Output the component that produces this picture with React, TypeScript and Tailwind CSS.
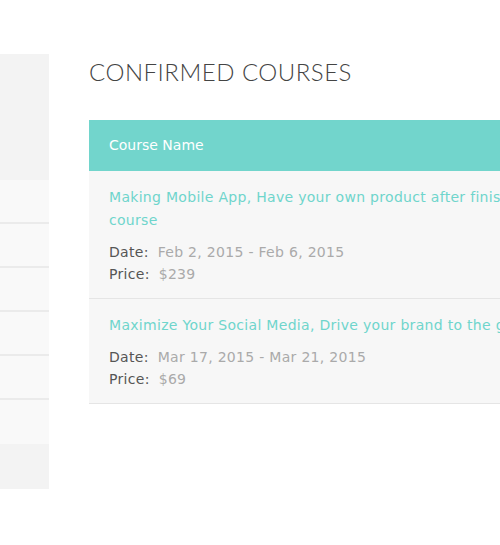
import React from "react";

const courses = [
  {
    title: "Making Mobile App, Have your own product after finishing the course",
    date: "Feb 2, 2015 - Feb 6, 2015",
    price: "$239",
  },
  {
    title: "Maximize Your Social Media, Drive your brand to the global market",
    date: "Mar 17, 2015 - Mar 21, 2015",
    price: "$69",
  },
];

export default function App() {
  return (
    <div className="h-[545px] w-[500px] overflow-hidden bg-white font-['DejaVu_Sans',sans-serif]">
      <div className="flex pt-[54px]">
        {/* Sidebar */}
        <aside className="w-[49px] shrink-0">
          <div className="h-[126px] bg-[#f3f3f3]" />
          {[0, 1, 2, 3, 4, 5].map((i) => (
            <div
              key={i}
              className={`h-[44px] bg-[#f9f9f9] ${i < 5 ? "border-b-2 border-[#ebebeb]" : ""}`}
            />
          ))}
          <div className="h-[45px] bg-[#f3f3f3]" />
        </aside>

        {/* Main */}
        <main className="ml-[40px] w-[600px] shrink-0">
          <h1 className="pt-[3px] font-['Lato',sans-serif] text-[24px] font-light leading-[30px] tracking-[0.5px] text-[#444]">
            CONFIRMED COURSES
          </h1>
          <div className="mt-[33px]">
            <div className="flex h-[51px] items-center bg-[#72d5cc] px-[20px] text-[14px] text-white">
              Course Name
            </div>
            {courses.map((c, i) => (
              <div
                key={c.title}
                className={`border-b border-[#e5e5e5] bg-[#f7f7f7] px-[20px] pt-[15px] ${i === 0 ? "pb-[13px]" : "pb-[13px]"}`}
              >
                <a className="block w-[500px] text-[14px] leading-[23px] tracking-[0.3px] text-[#6fd5cc]">
                  {c.title}
                </a>
                <div className="mt-[9px] text-[14px] leading-[22px] tracking-[0.3px]">
                  <div>
                    <span className="text-[#555]">Date:</span>
                    <span className="ml-[9px] text-[#aaa]">{c.date}</span>
                  </div>
                  <div>
                    <span className="text-[#555]">Price:</span>
                    <span className="ml-[9px] text-[#aaa]">{c.price}</span>
                  </div>
                </div>
              </div>
            ))}
          </div>
        </main>
      </div>
    </div>
  );
}
